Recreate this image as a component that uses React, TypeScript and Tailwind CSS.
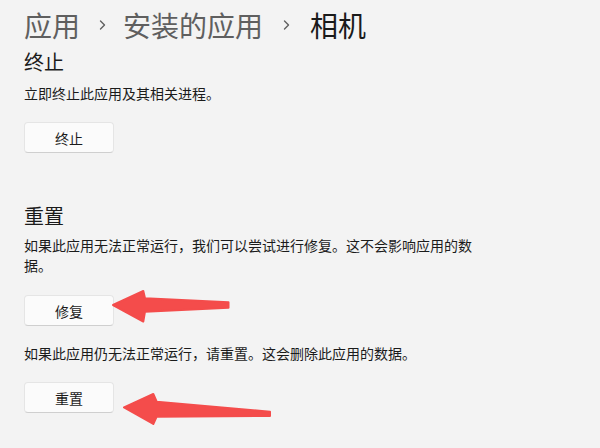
import React from "react";

const font = { fontFamily: '"Noto Sans CJK SC", "Noto Sans", sans-serif' };

function Chevron() {
  return (
    <svg width="28" height="36" viewBox="0 0 28 36" className="shrink-0" aria-hidden>
      <path d="M10.5 14 L14.5 18 L10.5 22" fill="none" stroke="#5f5f5f" strokeWidth="1.4" strokeLinecap="round" strokeLinejoin="round" />
    </svg>
  );
}

function Btn({ label, className = "" }: { label: string; className?: string }) {
  return (
    <button
      className={
        "w-[90px] h-[31px] rounded-[4px] bg-[#fbfbfb] border border-[#e5e5e5] border-b-[#cfcfcf] text-[14px] leading-[20px] text-[#1b1b1b] flex items-center justify-center " +
        className
      }
    >
      {label}
    </button>
  );
}

export default function App() {
  return (
    <div className="relative w-[600px] h-[448px] overflow-hidden bg-[#f3f3f3] text-[#1b1b1b]" style={font}>
      <div className="flex flex-col pl-[24px] pt-[7px]">
        <div className="flex items-center h-[36px] text-[28px] leading-[36px]">
          <span className="text-[#5f5f5f]">应用</span>
          <div className="w-[10px]" />
          <Chevron />
          <div className="w-[5px]" />
          <span className="text-[#5f5f5f]">安装的应用</span>
          <div className="w-[11px]" />
          <Chevron />
          <div className="w-[8px]" />
          <span className="text-[#1a1a1a]">相机</span>
        </div>

        <div className="mt-[5px] text-[20px] leading-[28px]">终止</div>
        <div className="mt-[7px] text-[14px] leading-[20px]">立即终止此应用及其相关进程。</div>
        <Btn label="终止" className="mt-[19px]" />

        <div className="mt-[49px] text-[20px] leading-[28px]">重置</div>
        <div className="mt-[5px] text-[14px] leading-[20px] max-w-[456px]">
          如果此应用无法正常运行，我们可以尝试进行修复。这不会影响应用的数据。
        </div>
        <Btn label="修复" className="mt-[20px]" />
        <div className="mt-[17px] text-[14px] leading-[20px]">
          如果此应用仍无法正常运行，请重置。这会删除此应用的数据。
        </div>
        <Btn label="重置" className="mt-[19px]" />
      </div>

      <svg className="absolute inset-0 pointer-events-none" width="600" height="448" viewBox="0 0 600 448">
        <polygon
          points="113,305 143.3,291 145,298.3 228.5,302.3 228.5,307.7 145,311.7 143.3,321.5"
          fill="#f44c4b"
          stroke="#f44c4b"
          strokeWidth="2"
          strokeLinejoin="round"
        />
        <polygon
          points="124,407.3 153.3,394 156.7,401.7 270,411.7 270,416 156.7,416.7 153.3,424"
          fill="#f44c4b"
          stroke="#f44c4b"
          strokeWidth="2"
          strokeLinejoin="round"
        />
      </svg>
    </div>
  );
}
